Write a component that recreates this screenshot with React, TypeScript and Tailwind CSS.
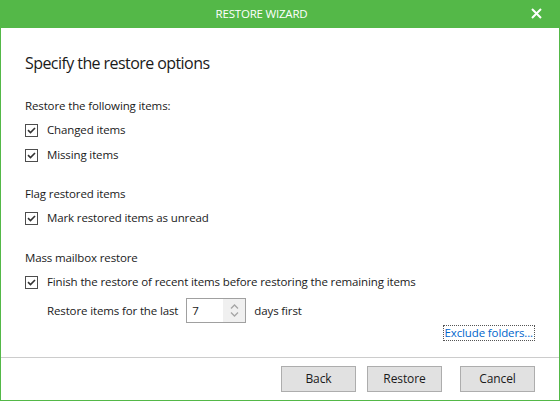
import React from "react";

const font = { fontFamily: '"Segoe UI", "Open Sans", "Noto Sans", sans-serif' };

function Check({ label }: { label: string }) {
  return (
    <div className="flex items-center h-4 gap-[9px]">
      <div className="w-[13px] h-[13px] border border-[#4d4d4d] bg-white flex items-center justify-center">
        <svg width="9" height="7" viewBox="0 0 9 7">
          <path d="M1 3.2 L3.5 5.6 L8 1" fill="none" stroke="#333333" strokeWidth="1.6" />
        </svg>
      </div>
      <span>{label}</span>
    </div>
  );
}

export default function App() {
  return (
    <div
      className="w-[560px] h-[401px] flex flex-col bg-white text-[11.5px] tracking-[-0.13px] text-[#1a1a1a] border-x border-b border-[#54b848]"
      style={font}
    >
      <div className="h-[28px] -mx-px bg-[#54b848] flex items-center justify-center pr-[37px] relative shrink-0">
        <span className="text-white text-[11.5px] tracking-[-0.2px] leading-4">RESTORE WIZARD</span>
        <svg className="absolute left-[531px] top-[8px]" width="11" height="11" viewBox="0 0 11 11">
          <path d="M1 1 L10 10 M10 1 L1 10" stroke="white" strokeWidth="2" />
        </svg>
      </div>
      <div className="flex-1 flex flex-col px-6 pt-6">
        <div className="text-[16px] leading-[22px] tracking-[-0.57px]">Specify the restore options</div>
        <div className="mt-6 leading-4">Restore the following items:</div>
        <div className="mt-2"><Check label="Changed items" /></div>
        <div className="mt-[9px]"><Check label="Missing items" /></div>
        <div className="mt-[23px] leading-4">Flag restored items</div>
        <div className="mt-2"><Check label="Mark restored items as unread" /></div>
        <div className="mt-6 leading-4">Mass mailbox restore</div>
        <div className="mt-2"><Check label="Finish the restore of recent items before restoring the remaining items" /></div>
        <div className="mt-2 ml-[22px] flex items-center gap-[8px]">
          <span>Restore items for the last</span>
          <div className="w-[60px] h-[25px] border border-[#a0a0a0] flex">
            <div className="flex-1 pl-[5px] flex items-center">7</div>
            <div className="w-[22px] bg-[#f0f0f0] flex flex-col items-center justify-center gap-[3px]">
              <svg width="9" height="5" viewBox="0 0 9 5"><path d="M1 4.5 L4.5 1 L8 4.5" fill="none" stroke="#a6a6a6" strokeWidth="1.3" /></svg>
              <svg width="9" height="5" viewBox="0 0 9 5"><path d="M1 0.5 L4.5 4 L8 0.5" fill="none" stroke="#a6a6a6" strokeWidth="1.3" /></svg>
            </div>
          </div>
          <span>days first</span>
        </div>
        <div className="flex justify-end mt-[2px]">
          <span className="text-[#0066cc] border border-dotted border-[#555] px-px leading-[14px]">Exclude folders...</span>
        </div>
      </div>
      <div className="h-px bg-[#cccccc] shrink-0" />
      <div className="h-[42px] shrink-0 flex items-start pt-[8px] pr-[24px] justify-end">
        <button className="w-[75px] h-[26px] bg-[#e1e1e1] border border-[#adadad] text-[12px] tracking-[-0.1px]" style={font}>Back</button>
        <button className="ml-[11px] w-[75px] h-[26px] bg-[#e1e1e1] border border-[#adadad] text-[12px] tracking-[-0.1px]" style={font}>Restore</button>
        <button className="ml-[18px] w-[75px] h-[26px] bg-[#e1e1e1] border border-[#adadad] text-[12px] tracking-[-0.1px]" style={font}>Cancel</button>
      </div>
    </div>
  );
}
